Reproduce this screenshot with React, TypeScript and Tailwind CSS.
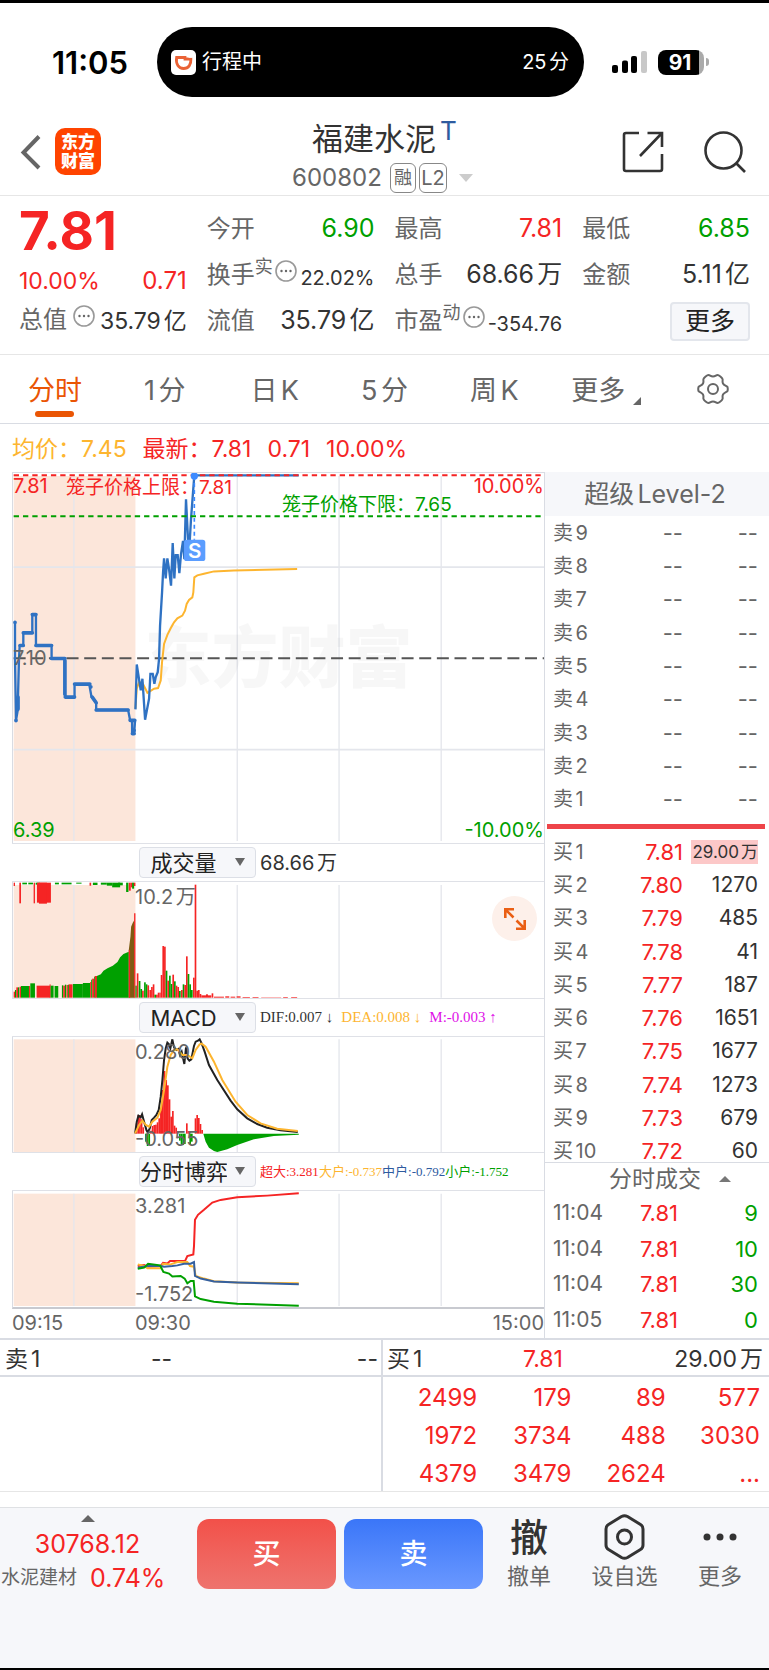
import type { ReactNode } from 'react';

const RED = '#f52424';
const GREEN = '#00a000';
const YELLOW = '#fdb52f';
const GRID = '#e4e6ec';

/* ---------- data ---------- */

const tabs = ['分时', '1分', '日K', '5分', '周K'];

const asks = ['卖9', '卖8', '卖7', '卖6', '卖5', '卖4', '卖3', '卖2', '卖1'];

const bids = [
  { label: '买1', price: '7.81', volume: '29.00万', highlight: true },
  { label: '买2', price: '7.80', volume: '1270' },
  { label: '买3', price: '7.79', volume: '485' },
  { label: '买4', price: '7.78', volume: '41' },
  { label: '买5', price: '7.77', volume: '187' },
  { label: '买6', price: '7.76', volume: '1651' },
  { label: '买7', price: '7.75', volume: '1677' },
  { label: '买8', price: '7.74', volume: '1273' },
  { label: '买9', price: '7.73', volume: '679' },
  { label: '买10', price: '7.72', volume: '60' },
];

const deals = [
  ['11:04', '7.81', '9'],
  ['11:04', '7.81', '10'],
  ['11:04', '7.81', '30'],
  ['11:05', '7.81', '0'],
];

const queue = [
  ['2499', '179', '89', '577'],
  ['1972', '3734', '488', '3030'],
  ['4379', '3479', '2624', '...'],
];

// Chart drawings use three units per pixel. [x, width, top, colour]
type Bar = [number, number, number, string];

const auctionBars: Bar[] = [
  [38, 4, 455, RED], [42, 4, 450, GREEN], [46, 5, 442, RED], [51, 4, 442, GREEN], [56, 4, 440, RED],
  [60, 24, 438, GREEN], [84, 3, 438, RED], [88, 14, 430, GREEN], [107, 41, 437, RED], [146, 3, 433, RED],
  [149, 9, 437, GREEN], [161, 11, 438, GREEN], [183, 4, 436, GREEN], [187, 5, 437, RED], [192, 4, 434, GREEN],
  [197, 4, 435, RED], [201, 3, 434, GREEN], [204, 11, 433, RED], [216, 30, 432, GREEN], [246, 22, 429, GREEN],
  [268, 3, 426, RED], [271, 3, 419, GREEN], [274, 6, 416, RED], [280, 4, 410, GREEN], [282, 7, 408, RED],
];

const auctionTopBars: Bar[] = [
  [38, 4, 138, RED], [55, 5, 190, RED], [64, 14, 133, GREEN], [82, 14, 133, GREEN], [98, 4, 190, RED],
  [104, 12, 134, GREEN], [108, 42, 188, RED], [114, 24, 191, RED], [162, 12, 133, GREEN], [182, 30, 133, GREEN],
  [226, 16, 131, GREEN], [266, 5, 137, RED], [276, 14, 135, GREEN], [300, 18, 134, GREEN], [318, 16, 137, GREEN],
  [334, 24, 142, GREEN], [352, 14, 136, GREEN], [376, 7, 156, GREEN], [384, 6, 152, RED], [390, 5, 142, RED],
  [394, 6, 146, GREEN], [399, 5, 138, RED],
];

const volumeBars: Bar[] = [
  [404, 4, 437, GREEN], [408, 5, 400, RED], [414, 5, 423, GREEN], [419, 5, 447, GREEN], [424, 5, 452, RED],
  [430, 5, 427, GREEN], [435, 5, 433, GREEN], [440, 5, 436, RED], [446, 5, 450, RED], [451, 5, 441, RED],
  [456, 5, 433, RED], [461, 5, 464, GREEN], [466, 5, 464, RED], [471, 5, 458, RED], [476, 4, 458, RED],
  [480, 5, 405, RED], [485, 5, 318, RED], [490, 5, 320, RED], [495, 5, 392, GREEN], [500, 5, 422, RED],
  [505, 5, 407, GREEN], [510, 5, 432, GREEN], [515, 5, 404, RED], [520, 5, 424, GREEN], [525, 5, 437, RED],
  [530, 5, 441, RED], [535, 5, 453, GREEN], [541, 5, 450, RED], [546, 5, 433, GREEN], [551, 5, 435, RED],
  [556, 5, 349, RED], [561, 5, 402, GREEN], [566, 5, 433, GREEN], [571, 5, 450, GREEN], [577, 5, 413, RED],
  [582, 5, 134, RED], [587, 5, 452, RED], [592, 5, 450, RED], [597, 5, 462, RED], [602, 14, 466, RED],
  [616, 6, 463, RED], [622, 10, 466, RED], [633, 5, 460, RED], [640, 30, 470, RED], [674, 12, 469, RED],
  [690, 14, 470, RED], [708, 12, 469, RED], [726, 22, 471, RED], [756, 18, 471, RED], [782, 60, 472, RED],
  [848, 14, 471, RED], [872, 18, 471, RED],
];

const macdBars: Bar[] = [
  [405, 5, 130, RED], [410, 5, 105, RED], [415, 5, 105, RED], [420, 5, 118, RED], [425, 5, 142, RED],
  [448, 5, 152, RED], [453, 5, 138, RED], [458, 5, 135, RED], [463, 5, 134, RED], [468, 5, 127, RED],
  [473, 6, 115, RED], [478, 6, 85, RED], [483, 6, 30, RED], [488, 6, -27, RED], [493, 6, 0, RED],
  [498, 6, 16, RED], [503, 6, 58, RED], [509, 5, 110, RED], [514, 5, 93, RED], [519, 5, 137, RED],
  [524, 5, 143, RED], [529, 4, 153, RED], [556, 5, 130, RED], [561, 4, 153, RED], [582, 5, 115, RED],
  [587, 5, 105, RED], [592, 5, 114, RED], [597, 5, 132, RED], [602, 5, 150, RED],
  [433, 5, 185, GREEN], [438, 5, 198, GREEN], [443, 5, 196, GREEN], [535, 5, 182, GREEN], [540, 5, 193, GREEN],
  [545, 5, 195, GREEN], [550, 5, 192, GREEN], [566, 5, 192, GREEN], [571, 5, 185, GREEN],
];

const Bars = ({ data, base }: { data: Bar[]; base: number }) => (
  <>
    {data.map(([x, width, y, fill], i) => (
      <rect key={i} x={x} width={width} y={Math.min(y, base)} height={Math.abs(base - y)} fill={fill} />
    ))}
  </>
);

/* ---------- small pieces ---------- */

const MoreDots = () => (
  <svg className="size-[22px] shrink-0" viewBox="0 0 22 22" fill="none">
    <circle cx="11" cy="11" r="10" stroke="#999" strokeWidth="1.6" />
    <circle cx="6.5" cy="11" r="1.2" fill="#666" />
    <circle cx="11" cy="11" r="1.2" fill="#666" />
    <circle cx="15.5" cy="11" r="1.2" fill="#666" />
  </svg>
);

interface StatProps {
  label: string;
  value: string;
  sup?: string;
  info?: boolean;
  className?: string;
}

function Stat({ label, value, sup, info, className = 'text-[25px] text-[#333]' }: StatProps) {
  return (
    <div className="flex h-[46px] items-center justify-between whitespace-nowrap">
      <dt className="flex items-center text-2xl text-[#666]">
        {label}
        {sup && <span className="mb-4 text-lg leading-5">{sup}</span>}
        {info && <span className={sup ? 'mb-2 ml-0.5' : 'mb-2 ml-1.5'}><MoreDots /></span>}
      </dt>
      <dd className={className}>{value}</dd>
    </div>
  );
}

interface PanelProps {
  viewBox: string;
  className: string;
  shadeTop: number;
  shadeHeight: number;
  children: ReactNode;
  labels?: ReactNode;
  watermark?: string;
}

// One chart pane: grid and auction shading, the drawing, then its labels on top
function Panel({ viewBox, className, shadeTop, shadeHeight, children, labels, watermark }: PanelProps) {
  return (
    <div className={`relative border-l border-[#d9dce3] text-xl text-[#666] ${className}`}>
      <svg className="absolute inset-0 size-full" viewBox={viewBox} preserveAspectRatio="none">
        <rect x="38" y={shadeTop} width="366" height={shadeHeight} fill="#fce6da" />
        <g stroke={GRID} strokeWidth="4">
          {[219, 710, 1016, 1323].map((x) => (
            <path key={x} d={`M${x} ${shadeTop}v${shadeHeight}`} />
          ))}
        </g>
      </svg>
      {watermark && (
        <div className="absolute inset-0 flex items-center justify-center text-[67px] font-black text-black/3">{watermark}</div>
      )}
      <svg className="absolute inset-0 size-full" viewBox={viewBox} preserveAspectRatio="none" fill="none">
        {children}
      </svg>
      {labels}
    </div>
  );
}

function Indicator({ id, name, children }: { id: string; name: string; children: ReactNode }) {
  return (
    <div className="flex h-[39px] items-center gap-1 border-y border-[#dfe1e7] pl-[127px] whitespace-nowrap">
      <div className="relative">
        <select
          id={id}
          aria-label={name}
          className="h-[31px] w-[117px] appearance-none rounded-sm border border-[#dcdfe6] bg-[#f6f7fa] pr-7 text-center text-[22px] leading-7 text-[#222] [text-align-last:center]"
        >
          <option>{name}</option>
        </select>
        <svg className="pointer-events-none absolute top-[11px] right-[11px] h-2 w-[10px]" viewBox="0 0 10 8">
          <path d="M0 0h10L5 8z" fill="#666" />
        </svg>
      </div>
      {children}
    </div>
  );
}

/* ---------- sections ---------- */

function StatusBar() {
  return (
    <div className="flex items-center pt-6 pb-2">
      <div className="w-[157px] pl-[23px] text-center text-[31px] leading-none font-semibold text-black">11:05</div>
      <div className="flex h-[70px] flex-1 items-center rounded-full bg-black pr-[15px] pl-[14px] text-xl text-white">
        <svg className="mr-1.5 size-[25px]" viewBox="0 0 25 25">
          <rect width="25" height="25" rx="5" fill="#fff" />
          <path d="M14 7.500H5.600c-1 6.500 2 11 7 11s7.600-4 7.300-9.500H14z" fill="none" stroke="#ea6235" strokeWidth="2.800" />
          <path d="M17.500 5.500h4v2.300h-4z" fill="#fff" />
        </svg>
        <span>行程中</span>
        <span className="ml-auto">25分</span>
      </div>
      <div className="flex w-[185px] items-center gap-[11px] pl-7">
        <svg className="h-[22px] w-[35px]" viewBox="0 0 35 22">
          <rect x="0" y="14" width="6" height="8" rx="2" />
          <rect x="10" y="9.500" width="6" height="12.500" rx="2" />
          <rect x="19" y="5" width="6" height="17" rx="2" />
          <rect x="29" y="0" width="6" height="22" rx="2" fill="#c8c8c8" />
        </svg>
        <div className="flex items-center">
          <div className="h-[25px] w-[46px] rounded-lg bg-[linear-gradient(90deg,#000_90%,#aaa_90%)] pr-0.5 text-center text-[21px] leading-[25px] font-bold text-white">
            91
          </div>
          <div className="ml-0.5 h-2 w-[3px] rounded-r-full bg-[#aaa]" />
        </div>
      </div>
    </div>
  );
}

function Header() {
  return (
    <header className="grid h-[91px] grid-cols-[1fr_auto_1fr] items-center border-b border-[#e6e6e6] px-5">
      <div className="flex items-center gap-[14px] pt-[3px]">
        <button aria-label="返回">
          <svg className="h-[36px] w-[21px]" viewBox="0 0 21 36" fill="none" stroke="#666" strokeWidth="4">
            <path d="M19 2.500L3.500 18.500 19 34" />
          </svg>
        </button>
        <a href="#home" className="flex h-[47px] w-[46px] flex-col items-center justify-center rounded-[10px] bg-[#ff4400] text-[17px] leading-[19px] font-black text-white">
          <span>东方</span>
          <span>财富</span>
        </a>
      </div>
      <div className="flex flex-col items-center gap-1.5 pt-[13px]">
        <h1 className="flex items-start text-[31px] leading-[36px] text-[#333]">
          福建水泥
          <span className="ml-1 text-[26px] leading-[20px] text-[#2e5b9f]">T</span>
        </h1>
        <div className="flex h-[30px] items-center text-2xl text-[#666]">
          600802
          <span className="ml-2 h-[30px] w-[26px] rounded-md border border-[#888] text-center text-lg leading-7">融</span>
          <span className="ml-[3px] h-[30px] w-[28px] rounded-md border border-[#888] text-center text-xl leading-7">L2</span>
          <svg className="mr-1 ml-3 h-2 w-[14px]" viewBox="0 0 14 8">
            <path d="M0 0h14L7 8z" fill="#ccc" />
          </svg>
        </div>
      </div>
      <div className="flex items-center justify-end gap-10 pt-[3px] pr-[3px]">
        <button aria-label="分享">
          <svg className="size-[42px]" viewBox="0 0 42 42" fill="none" stroke="#333" strokeWidth="2.600">
            <path d="M17 2H4a2 2 0 0 0-2 2v34a2 2 0 0 0 2 2h34a2 2 0 0 0 2-2V23M25.500 2H40v14M40 2L18 25" />
          </svg>
        </button>
        <button aria-label="搜索">
          <svg className="size-[42px]" viewBox="0 0 42 42" fill="none" stroke="#333" strokeWidth="2.600">
            <circle cx="19.500" cy="19.500" r="18" />
            <path d="M32 32l9 9" />
          </svg>
        </button>
      </div>
    </header>
  );
}

function Quote() {
  return (
    <dl className="grid grid-cols-4 gap-x-5 border-b border-[#e6e6e6] px-[19px] pt-[10px] pb-[10px]">
      <div>
        <div className="h-[53px] text-[53px] leading-[50px] font-bold text-[#f52424]">7.81</div>
        <div className="flex h-[38px] items-end justify-between leading-8 text-[#f52424]">
          <span className="text-[23px]">10.00%</span>
          <span className="text-2xl leading-8">0.71</span>
        </div>
        <Stat label="总值" value="35.79亿" info className="pt-0.5 text-[23px] text-[#333]" />
      </div>
      <div>
        <Stat label="今开" value="6.90" className="text-[25px] text-[#00a000]" />
        <Stat label="换手" sup="实" value="22.02%" info className="pt-1.5 text-xl text-[#333]" />
        <Stat label="流值" value="35.79亿" />
      </div>
      <div>
        <Stat label="最高" value="7.81" className="text-[25px] text-[#f52424]" />
        <Stat label="总手" value="68.66万" />
        <Stat label="市盈" sup="动" value="-354.76" info className="pt-1.5 text-xl text-[#333]" />
      </div>
      <div>
        <Stat label="最低" value="6.85" className="text-[25px] text-[#00a000]" />
        <Stat label="金额" value="5.11亿" />
        <div className="flex h-[46px] items-center justify-end">
          <button className="h-[39px] w-20 rounded-sm border-2 border-[#e3e6ec] bg-[#f6f7fa] text-[25px] leading-8 text-[#222]">更多</button>
        </div>
      </div>
    </dl>
  );
}

function Tabs() {
  return (
    <nav className="grid h-[69px] grid-cols-7 border-b border-[#d9dce3] text-[27px] text-[#666]">
      {tabs.map((tab, i) => (
        <button key={tab} className={i === 0 ? 'flex flex-col items-center pt-4 leading-[40px] text-[#ea5504]' : 'pt-1'}>
          {tab}
          {i === 0 && <span className="h-1.5 w-[39px] rounded-full bg-[#ea5504]" />}
        </button>
      ))}
      <button className="flex items-center justify-center gap-2 pt-1 pl-1">
        更多
        <svg className="mt-5 size-2" viewBox="0 0 8 8">
          <path d="M8 0v8H0z" fill="#666" />
        </svg>
      </button>
      <button aria-label="设置" className="flex items-center justify-center pr-0.5">
        <svg className="size-8" viewBox="0 0 32 32" fill="none" stroke="#666" strokeWidth="2">
          <path
            strokeLinejoin="round"
            d="M11.500 2c1.500 0 2 1.500 4.500 1.500S19 2 20.500 2s4.500 2.500 5 4-.5 2.500.5 4.500 4 2.500 4.500 3.500c.4 1.500.4 2.500 0 4-.5 1-3.500 1.500-4.500 3.500s0 3-.5 4.500-3.500 4-5 4-2-1.500-4.500-1.500S13 30 11.500 30s-4.500-2.500-5-4 .5-2.500-.5-4.500-4-2.500-4.500-3.500c-.4-1.500-.4-2.500 0-4 .5-1 3.500-1.500 4.500-3.500S6 7.500 6.500 6s3.500-4 5-4z"
          />
          <circle cx="16" cy="16" r="5" />
        </svg>
      </button>
    </nav>
  );
}

function Charts() {
  return (
    <div className="min-w-0 flex-1 border-r border-[#d9dce3] pl-3">
      {/* Price */}
      <Panel
        viewBox="36 141 1596 1113"
        className="h-[371px] border-t"
        shadeTop={150}
        shadeHeight={1098}
        watermark="东方财富"
        labels={
          <>
            <span className="absolute top-0 left-0 leading-[26px] text-[#f52424]">7.81</span>
            <span className="absolute top-[2px] left-[53px] text-[19px] leading-[26px] text-[#f52424]">笼子价格上限：7.81</span>
            <span className="absolute top-0 right-0 leading-[26px] text-[#f52424]">10.00%</span>
            <span className="absolute top-[19px] left-[269px] text-[19px] leading-[26px] text-[#00a000]">笼子价格下限：7.65</span>
            <span className="absolute top-[172px] left-0 leading-[26px]">7.10</span>
            <span className="absolute bottom-0 left-0 leading-[26px] text-[#00a000]">6.39</span>
            <span className="absolute right-0 bottom-0 leading-[26px] text-[#00a000]">-10.00%</span>
          </>
        }
      >
        <path d="M38 424H1632M38 973H1632" stroke={GRID} strokeWidth="5" />
        <path d="M38 698H1632" stroke="#555" strokeWidth="6" strokeDasharray="36 17" />
        <path
          d="M404 850L408 790 415 770 425 772 440 802 452 795 460 790 472 788 480 765 484 710 490 655 500 628 510 608 520 590 530 578 545 570 553 555 558 535 565 523 575 515 578 500 581 455 590 449 610 444 640 437 700 434 890 430"
          stroke={YELLOW}
          strokeWidth="6"
        />
        <path
          d="M42 590V700L45 885 51 850V815L54 700 56 662 67 660V622H94V567H105V660H152V699H192V807L195 815H221V776H265L272 815 286 832V854H382L388 885H394V925H400L403 885"
          stroke="#2f72c3"
          strokeWidth="7"
        />
        <path
          d="M42 590v1M45 885v1M51 852V815M57 660H67M67 622H94M94 567H105M105 660H152M152 699H192M192 705V807M193 815H221M221 776H267M270 784v1M274 815L286 832M286 854H382M388 885h14M395 925h5M400 915v1"
          stroke="#2f72c3"
          strokeWidth="11"
          strokeLinecap="round"
        />
        <path
          d="M404 852L408 717 420 795 425 760 433 883 445 820 449 745H456L461 775 465 755 471 740 475 700 478 600 484 500 487 440 490 398 495 458 500 398 505 430 511 480 516 352 521 458 525 388H531L536 442 541 385 547 345 551 400 556 220 562 340 567 350 571 280 577 200 581 148H895"
          stroke="#2f72c3"
          strokeWidth="7"
        />
        <path d="M38 148H1632" stroke={RED} strokeWidth="6" strokeDasharray="16 12" />
        <path d="M38 271H1632" stroke={GREEN} strokeWidth="6" strokeDasharray="16 12" />
        <path d="M581 150V342" stroke="#3d8bff" strokeWidth="5" strokeDasharray="12 9" />
        <circle cx="581" cy="150" r="11" fill="#3d8bff" />
        <rect x="550" y="342" width="64" height="64" rx="8" fill="#5b9dff" />
        <text x="582" y="396" textAnchor="middle" fontSize="62" fontWeight="600" fill="#fff">S</text>
      </Panel>

      {/* Volume */}
      <Indicator id="volume" name="成交量">
        <span className="text-xl text-[#333]">68.66万</span>
      </Indicator>
      <Panel
        viewBox="36 126 1596 348"
        className="h-[116px]"
        shadeTop={135}
        shadeHeight={338}
        labels={
          <>
            <span className="absolute top-[2px] left-[122px] leading-[26px]">10.2万</span>
            <button aria-label="展开" className="absolute top-[14px] right-[7px] flex size-[45px] items-center justify-center rounded-full bg-[#fdf0ea]">
              <svg className="size-6" viewBox="0 0 24 24" fill="none" stroke="#ea5f14" strokeWidth="2.600">
                <path d="M2.300 11V2.300H11M2.300 2.300L10.500 10.500M21.700 13v8.700H13M21.700 21.700L13.500 13.500" />
              </svg>
            </button>
          </>
        }
      >
        <Bars data={auctionTopBars} base={128} />
        <Bars data={auctionBars} base={473} />
        <path d="M288 473V408L300 403 308 392 320 385 336 377 350 366 358 352 368 342 384 335V473z" fill={GREEN} />
        <path d="M384 473V330L389 290 391 260 396 248 401 240V473z" fill="#7d5b12" />
        <path d="M386 473V330M402 473V220" stroke={RED} strokeWidth="4" />
        <Bars data={volumeBars} base={473} />
      </Panel>

      {/* MACD */}
      <Indicator id="macd" name="MACD">
        <span className="flex gap-2 font-['Liberation_Serif','Noto_Sans_CJK_SC',serif] text-[15px]">
          <span className="text-[#333]">DIF:0.007 ↓</span>
          <span className="text-[#fdb52f]">DEA:0.008 ↓</span>
          <span className="text-[#e010e8]">M:-0.003 ↑</span>
        </span>
      </Indicator>
      <Panel
        viewBox="36 -129 1596 345"
        className="h-[115px]"
        shadeTop={-122}
        shadeHeight={338}
        labels={
          <>
            <span className="absolute top-[2px] left-[122px] leading-[26px]">0.280</span>
            <span className="absolute bottom-0 left-[122px] leading-[26px]">-0.055</span>
          </>
        }
      >
        <Bars data={macdBars} base={161} />
        <path d="M608 161L615 185 625 203 640 213 650 216 680 208 710 195 760 178 820 168 895 164V161z" fill={GREEN} />
        <path
          d="M403 160L408 125 413 107 420 112 424 103 430 125 437 150 441 157 447 145 453 120 460 113 467 105 474 90 480 50 485 0 490 -60 495 -95 500 -112 505 -107 509 -95 515 -122 520 -98 527 -90 533 -93 538 -75 543 -85 551 -48 556 -98 561 -64 566 -58 572 -62 576 -82 580 -102 585 -115 592 -118 597 -122 603 -110 612 -85 625 -45 650 0 690 62 710 88 740 115 770 132 800 143 840 151 892 156"
          stroke="#222"
          strokeWidth="6"
        />
        <path
          d="M403 160L415 135 425 122 435 135 445 140 455 125 470 113 480 90 490 30 500 -40 510 -75 520 -90 530 -92 545 -75 560 -75 575 -65 585 -90 597 -107 603 -109 615 -100 640 -55 665 0 705 65 740 105 780 130 830 146 892 153"
          stroke={YELLOW}
          strokeWidth="6"
        />
      </Panel>

      {/* Order flow */}
      <Indicator id="flow" name="分时博弈">
        <span className="font-['Liberation_Serif','Noto_Sans_CJK_SC',serif] text-[13px] [text-autospace:no-autospace]">
          <span className="text-[#f52424]">超大:3.281</span>
          <span className="text-[#fdb52f]">大户:-0.737</span>
          <span className="text-[#2e5b9f]">中户:-0.792</span>
          <span className="text-[#00a000]">小户:-1.752</span>
        </span>
      </Indicator>
      <Panel
        viewBox="36 333 1596 351"
        className="h-[118px] border-b-2 border-b-[#c8cad0]"
        shadeTop={341}
        shadeHeight={340}
        labels={
          <>
            <span className="absolute top-[2px] left-[122px] leading-[26px]">3.281</span>
            <span className="absolute bottom-0 left-[122px] leading-[26px]">-1.752</span>
          </>
        }
      >
        <g strokeWidth="6">
          <path d="M411 560L430 557 440 562 480 560 487 550 500 552 508 545H553L560 530 578 525 580 500 583 420 592 405 610 390 635 368 660 360 710 352 800 347 895 340" stroke={RED} />
          <path d="M411 555L430 560 440 567H480L487 553 510 555 530 548H560L568 560 580 562 585 590 610 598 640 606 710 610 895 612" stroke={YELLOW} />
          <path d="M411 565L440 560H480L490 562 515 560 530 558 550 553H570L580 548 583 590 600 598 640 607 710 610 895 615" stroke="#35609f" />
          <path d="M411 568L430 565 442 553 478 558 488 578 505 583 515 592 540 590 552 598 560 612 570 605H579L583 652 600 660 640 668 710 674 895 680" stroke={GREEN} />
        </g>
      </Panel>
      <div className="flex h-[28px] items-center text-xl text-[#666]">
        <span className="w-[123px]">09:15</span>
        <span>09:30</span>
        <span className="ml-auto">15:00</span>
      </div>
    </div>
  );
}

function OrderBook() {
  return (
    <aside className="flex w-[224px] shrink-0 flex-col text-xl text-[#666]">
      <h2 className="h-11 bg-[#f6f7fa] pr-1 text-center text-[25px] leading-11">超级Level-2</h2>
      <table className="ml-2 h-[300px] w-[205px]">
        <tbody>
          {asks.map((label) => (
            <tr key={label}>
              <th className="p-0 text-left font-normal">{label}</th>
              <td className="p-0 text-right text-[22px] leading-6">--</td>
              <td className="w-[75px] p-0 text-right text-[22px] leading-6">--</td>
            </tr>
          ))}
        </tbody>
      </table>
      <div className="mt-2 mr-1 ml-0.5 h-[5px] bg-[#ee4449]" />
      <div className="mt-1.5 h-[328px] border-b border-[#d9dce3]">
        <table className="ml-2 h-[333px] w-[205px]">
          <tbody>
            {bids.map((bid) => (
              <tr key={bid.label}>
                <th className="p-0 text-left leading-6 font-normal">{bid.label}</th>
                <td className="p-0 text-right text-[22px] leading-6 text-[#f52424]">{bid.price}</td>
                <td className="w-[75px] p-0 text-right text-[21px] leading-6 text-[#333]">
                  {bid.highlight ? <span className="ml-auto block w-[67px] bg-[#fcc8c8] text-[17px] whitespace-nowrap">{bid.volume}</span> : bid.volume}
                </td>
              </tr>
            ))}
          </tbody>
        </table>
      </div>
      <button className="flex h-8 items-center justify-center gap-[18px] pl-[26px] text-[23px]">
        分时成交
        <svg className="h-1.5 w-[12px]" viewBox="0 0 12 6">
          <path d="M0 6h12L6 0z" fill="#777" />
        </svg>
      </button>
      <table className="ml-2 h-[143px] w-[205px]">
        <tbody>
          {deals.map(([time, price, volume], i) => (
            <tr key={i}>
              <td className="p-0 text-[21px] leading-6">{time}</td>
              <td className="p-0 text-right text-[22px] leading-6 text-[#f52424]">{price}</td>
              <td className="w-20 p-0 text-right text-[22px] leading-6 text-[#00a000]">{volume}</td>
            </tr>
          ))}
        </tbody>
      </table>
    </aside>
  );
}

function Queue() {
  return (
    <section className="grid grid-cols-[383fr_386fr] border-t-2 border-b border-t-[#d9dce3] border-b-[#e6e6e6] text-[23px] text-[#333]">
      <div className="border-r-2 border-[#d9dce3]">
        <div className="grid h-[37px] grid-cols-[1fr_auto_1fr] items-center border-b-2 border-[#d9dce3] pt-0.5 pr-[3px] pl-[5px]">
          <span>卖1</span>
          <span className="mr-[60px]">--</span>
          <span className="text-right">--</span>
        </div>
      </div>
      <div>
        <div className="grid h-[37px] grid-cols-[1fr_auto_1fr] items-center border-b-2 border-[#d9dce3] pt-0.5 pr-1.5 pl-1">
          <span>买1</span>
          <span className="mr-[64px] text-[#f52424]">7.81</span>
          <span className="text-right">29.00万</span>
        </div>
        <table className="mr-[9px] h-[114px] w-[calc(100%-9px)] table-fixed text-2xl leading-8 text-[#f52424]">
          <tbody>
            {queue.map((row, i) => (
              <tr key={i}>
                {row.map((n) => (
                  <td key={n} className="p-0 pt-1 text-right">{n}</td>
                ))}
              </tr>
            ))}
          </tbody>
        </table>
      </div>
    </section>
  );
}

function BottomBar() {
  return (
    <footer className="mt-[15px] flex h-[161px] border-t border-[#dfe1e4] bg-[#f6f7fa] text-[#666]">
      <button className="flex w-[189px] flex-col pt-[7px]">
        <svg className="ml-[81px] h-[7px] w-[14px]" viewBox="0 0 14 7">
          <path d="M0 7h14L7 0z" fill="#666" />
        </svg>
        <span className="mt-1.5 w-[175px] text-center text-[25px] leading-8 text-[#f52424]">30768.12</span>
        <span className="mt-0.5 flex items-center gap-[13px] pl-px text-[19px] leading-8">
          水泥建材
          <span className="text-[25px] leading-8 text-[#f52424]">0.74%</span>
        </span>
      </button>
      <div className="flex flex-1 gap-2 px-2 pt-[11px] text-[28px] font-medium text-white">
        <button className="h-[70px] flex-1 rounded-xl bg-linear-to-b from-[#f25049] to-[#ee736e]">买</button>
        <button className="h-[70px] flex-1 rounded-xl bg-linear-to-b from-[#3a76f8] to-[#6a98ff]">卖</button>
      </div>
      <div className="flex w-[278px] justify-between pt-1.5 pr-[27px] pl-4 text-[22px] leading-8">
        <button className="flex flex-col items-center">
          <span className="h-[46px] text-[38px] leading-[46px] font-medium text-[#333]">撤</span>
          撤单
        </button>
        <button className="flex flex-col items-center">
          <svg className="h-[46px] w-[41px]" viewBox="0 0 41 46" fill="none" stroke="#333" strokeWidth="3">
            <path strokeLinejoin="round" d="M17.500 2.500q3-1.500 6 0l13 8q2.500 1.500 2.500 4.500v16q0 3-2.500 4.500l-13 8q-3 1.500-6 0l-13-8Q2 34 2 31V15q0-3 2.500-4.500z" />
            <circle cx="20.500" cy="23" r="7" />
          </svg>
          设自选
        </button>
        <button className="flex flex-col items-center">
          <svg className="h-[46px] w-[34px]" viewBox="0 0 34 46" fill="#333">
            <circle cx="4" cy="23" r="3.500" />
            <circle cx="17" cy="23" r="3.500" />
            <circle cx="30" cy="23" r="3.500" />
          </svg>
          更多
        </button>
      </div>
    </footer>
  );
}

export default function App() {
  return (
    <main className="border-y-[3px] border-black bg-white font-['Inter','Noto_Sans_CJK_SC',sans-serif] [text-autospace:normal]">
      <StatusBar />
      <Header />
      <Quote />
      <Tabs />
      <div className="flex h-12 items-center gap-4 pt-0.5 pl-3 text-[23px] text-[#f52424]">
        <span className="text-[#fdb52f]">均价：7.45</span>
        <span>最新：7.81</span>
        <span>0.71</span>
        <span>10.00%</span>
      </div>
      <div className="flex">
        <Charts />
        <OrderBook />
      </div>
      <Queue />
      <BottomBar />
    </main>
  );
}
